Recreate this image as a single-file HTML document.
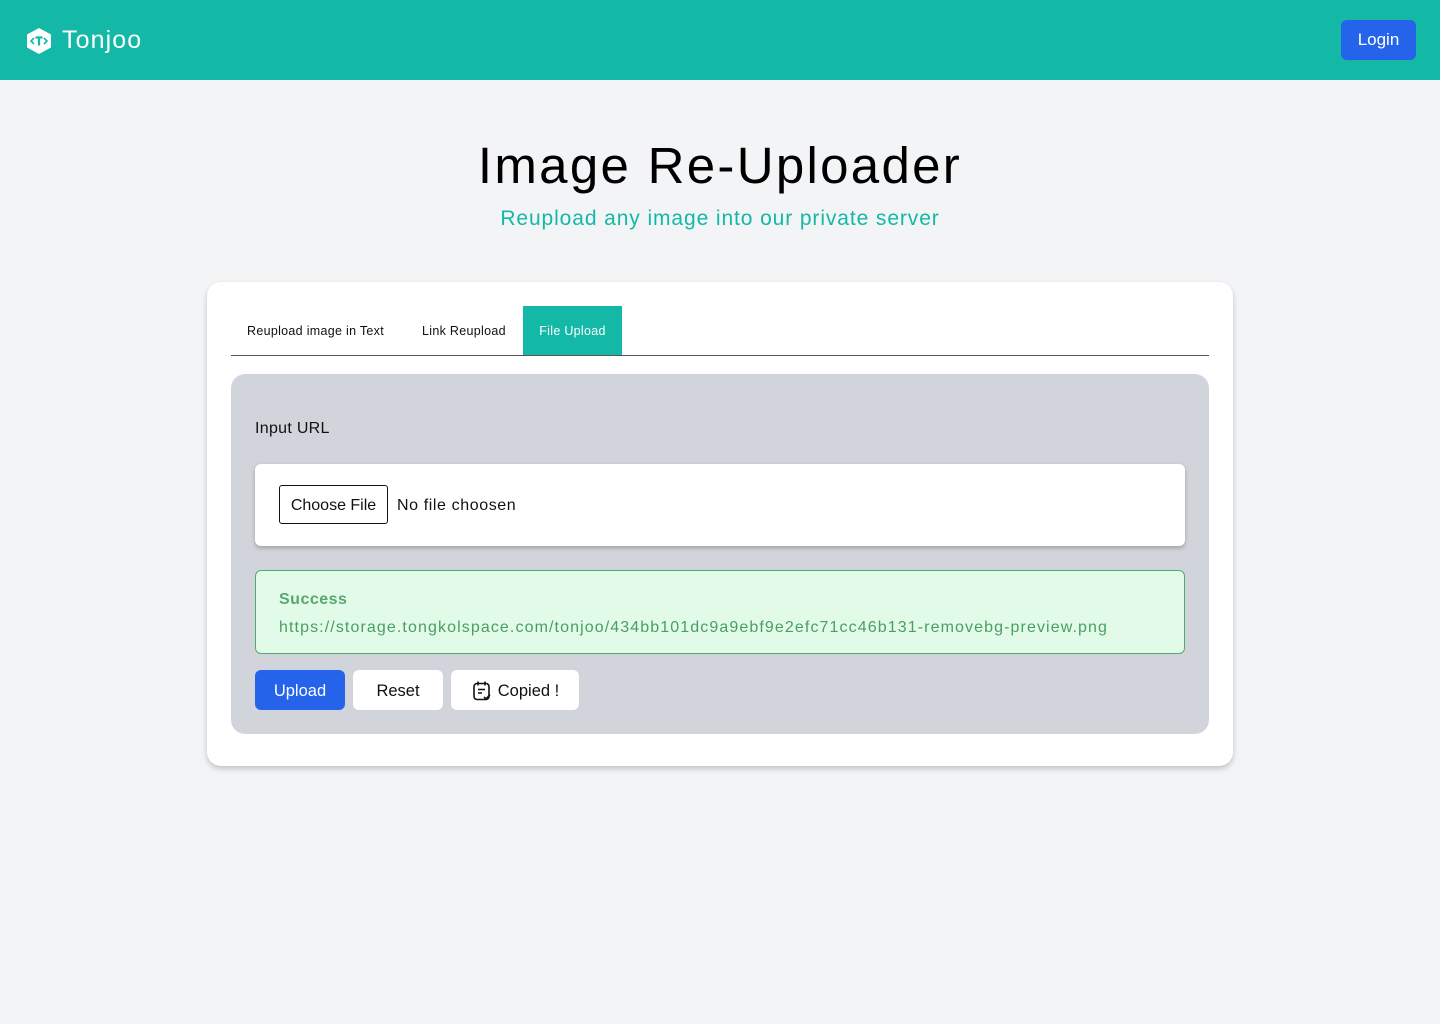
<!DOCTYPE html>
<html><head><meta charset="utf-8"><style>
*{box-sizing:border-box;margin:0;padding:0}
body{width:1440px;height:1024px;background:#f3f4f6;font-family:"Liberation Sans",sans-serif;color:#111;position:relative;overflow:hidden}
.nav{height:80px;background:#14b8a6;position:relative}
.logo{position:absolute;left:26px;top:26px;display:flex;align-items:center;color:#fff;font-size:25px}
.logo span{margin-left:10px;letter-spacing:1.1px}
.login{position:absolute;left:1341px;top:20px;width:75px;height:40px;background:#2563eb;border-radius:6px;color:#fff;font-size:17px;display:flex;align-items:center;justify-content:center}
h1{position:absolute;top:136px;width:100%;text-align:center;font-size:51px;font-weight:normal;letter-spacing:2.3px;color:#000}
.sub{position:absolute;top:207px;width:100%;text-align:center;font-size:21px;color:#14b8a6;letter-spacing:.9px}
.card{position:absolute;left:207px;top:282px;width:1026px;height:484px;background:#fff;border-radius:14px;box-shadow:0 3px 6px rgba(0,0,0,.2)}
.tabs{position:absolute;left:24px;top:24px;width:978px;height:50px;border-bottom:1px solid #555;font-size:12.5px;letter-spacing:.3px}
.tab{position:absolute;top:0;height:49px;display:flex;align-items:center}
.panel{position:absolute;left:24px;top:92px;width:978px;height:360px;background:#d1d5db;border-radius:14px}
.lbl{position:absolute;left:24px;top:46px;font-size:16px;letter-spacing:.3px}
.fi{position:absolute;left:24px;top:90px;width:930px;height:82px;background:#fff;border-radius:6px;box-shadow:0 2px 4px rgba(0,0,0,.25)}
.cf{position:absolute;left:24px;top:21px;width:109px;height:39px;border:1px solid #111;border-radius:3px;font-size:16px;display:flex;align-items:center;justify-content:center;padding-top:2px}
.nf{position:absolute;left:142px;top:33px;font-size:16px;letter-spacing:.6px}
.ok{position:absolute;left:24px;top:196px;width:930px;height:84px;background:#e2fbe8;border:1px solid #4ead6a;border-radius:6px;color:#4a9e64;font-size:16px}
.btn{position:absolute;top:296px;height:40px;border-radius:6px;background:#fff;font-size:16.5px;display:flex;align-items:center;justify-content:center;padding-top:2px}
</style></head><body>
<div class="nav">
<div class="logo"><svg width="26" height="28" viewBox="0 0 26 28"><path d="M13 1 L25 7.5 V20.5 L13 27 L1 20.5 V7.5Z" fill="#fff"/><path d="M8 11l-3 3 3 3M18 11l3 3-3 3" stroke="#14b8a6" stroke-width="1.6" fill="none"/><path d="M9.5 10.5h7M13 10.5v8" stroke="#14b8a6" stroke-width="2.2"/></svg><span>Tonjoo</span></div>
<div class="login">Login</div>
</div>
<h1>Image Re-Uploader</h1>
<div class="sub">Reupload any image into our private server</div>
<div class="card">
<div class="tabs">
<div class="tab" style="left:16px">Reupload image in Text</div>
<div class="tab" style="left:191px">Link Reupload</div>
<div class="tab" style="left:292px;width:99px;background:#14b8a6;color:#fff;justify-content:center">File Upload</div>
</div>
<div class="panel">
<div class="lbl">Input URL</div>
<div class="fi"><div class="cf">Choose File</div><div class="nf">No file choosen</div></div>
<div class="ok"><div style="position:absolute;left:23px;top:20px;font-weight:bold;opacity:.9;letter-spacing:.5px">Success</div><div style="position:absolute;left:23px;top:48px;letter-spacing:1.1px;white-space:nowrap">https://storage.tongkolspace.com/tonjoo/434bb101dc9a9ebf9e2efc71cc46b131-removebg-preview.png</div></div>
<div class="btn" style="left:24px;width:90px;background:#2563eb;color:#fff">Upload</div>
<div class="btn" style="left:122px;width:90px">Reset</div>
<div class="btn" style="left:220px;width:128px"><svg width="22" height="22" viewBox="0 0 22 22" fill="none" stroke="#111" stroke-width="1.6" style="margin-right:5px"><rect x="3" y="3.5" width="15" height="16" rx="3"/><path d="M7 1.5v4M14 1.5v4M7 9.5h7M7 13h4"/><path d="M13 17l2 2 4-4.5"/></svg>Copied !</div>
</div>
</div>
</body></html>
